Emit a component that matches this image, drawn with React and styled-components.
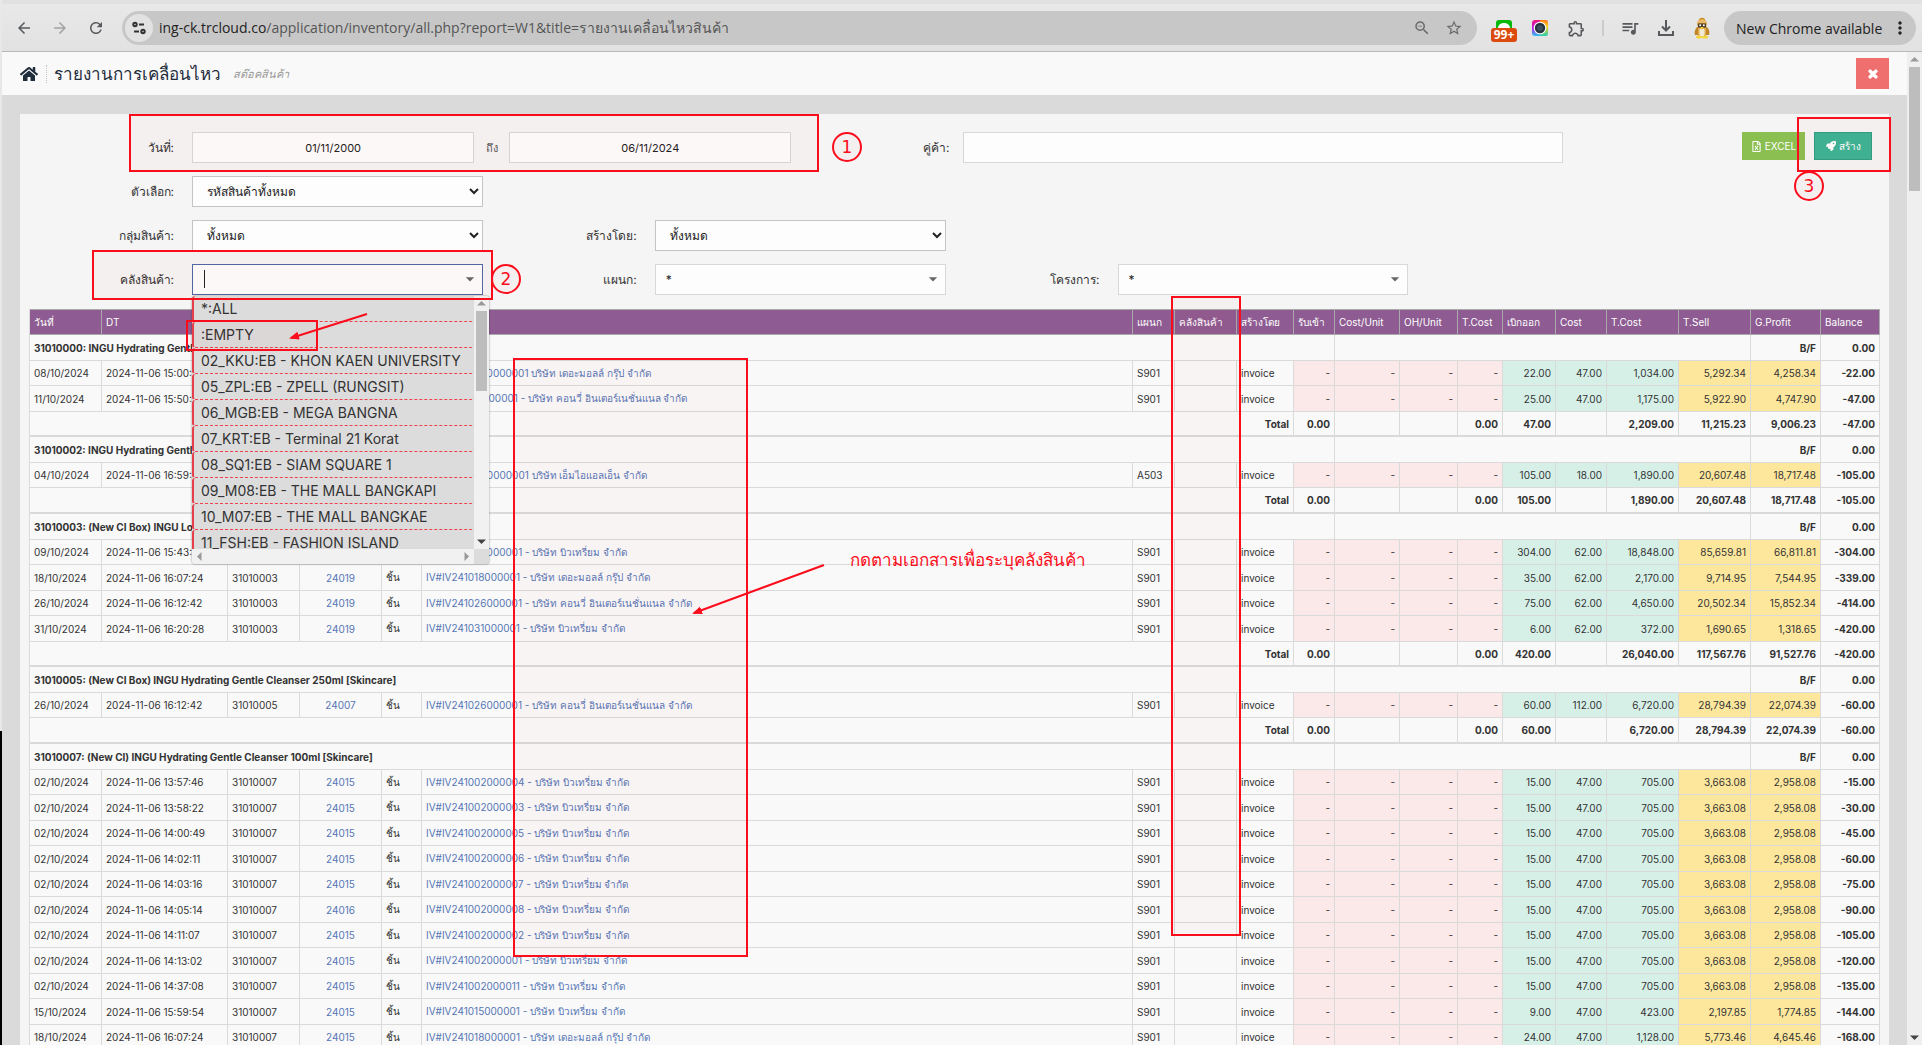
import styled, { createGlobalStyle } from "styled-components";
import {
  MdArrowBack,
  MdArrowForward,
  MdRefresh,
  MdZoomOut,
  MdStarBorder,
  MdOutlineExtension,
  MdOutlineQueueMusic,
  MdMoreVert,
  MdArrowDropDown,
  MdArrowDropUp,
  MdArrowLeft,
  MdArrowRight,
} from "react-icons/md";
import { FaHome, FaRocket, FaRegFileExcel, FaTimes } from "react-icons/fa";

const GlobalStyle = createGlobalStyle`
  * {
    box-sizing: border-box;
  }

  body {
    margin: 0;
    background: #fff;
    color: #333;
    font-family: Inter, "Noto Sans", sans-serif;
    font-size: 12px;
    overflow: hidden;
  }

  a {
    color: #5576b5;
    text-decoration: none;
  }
`;

const Screen = styled.div`
  position: relative;
  display: flex;
  height: 100vh;
  padding: 0 4px 5px 0;
  overflow: hidden;
`;

const EdgeStrip = styled.div`
  flex: none;
  width: 2px;
  background: linear-gradient(#e8e8e8 70%, #000 70%);
`;

const Browser = styled.div`
  flex: 1;
  min-width: 0;
  display: flex;
  flex-direction: column;
`;

/* ---------- browser toolbar ---------- */

const Toolbar = styled.div`
  flex: none;
  display: flex;
  align-items: center;
  height: 52px;
  padding: 1px 6px 0 4px;
  border-top: 4px solid #e1e1e1;
  border-bottom: 1px solid #b9b9b9;
  background: linear-gradient(#e8e8e8, #e2e2e2);
  font-family: "Open Sans", "Noto Sans", sans-serif;
`;

const ToolButton = styled.button`
  position: relative;
  flex: none;
  display: flex;
  align-items: center;
  justify-content: center;
  width: 36px;
  height: 34px;
  padding: 0;
  border: 0;
  background: none;
  color: ${(p) => (p.$faded ? "#a2a2a2" : "#57595c")};
`;

const AddressBar = styled.div`
  flex: 1;
  display: flex;
  align-items: center;
  height: 34px;
  margin: 0 9px 0 8px;
  padding: 0 7px 0 3px;
  border-radius: 17px;
  background: #c7c7c7;
`;

const SiteInfo = styled.span`
  display: flex;
  align-items: center;
  justify-content: center;
  width: 28px;
  height: 28px;
  margin-right: 6px;
  border-radius: 50%;
  background: #e2e2e2;
`;

const Address = styled.span`
  flex: 1;
  color: #555;
  font-size: 14px;
  white-space: nowrap;

  b {
    color: #222;
    font-weight: 400;
  }
`;

const AddressIcon = styled.span`
  display: flex;
  justify-content: center;
  width: 32px;
  color: #6a6b6d;
`;

const UnreadBadge = styled.span`
  position: absolute;
  left: 5px;
  bottom: 3px;
  width: 26px;
  height: 14px;
  border-radius: 3px;
  background: #dd4a0e;
  color: #fff;
  font-family: "Open Sans", sans-serif;
  font-size: 12px;
  font-weight: 700;
  line-height: 14px;
`;

const ToolDivider = styled.span`
  width: 2px;
  height: 16px;
  margin: 0 8px;
  background: #cbcbcb;
`;

const UpdatePill = styled.button`
  display: flex;
  align-items: center;
  justify-content: space-between;
  width: 192px;
  height: 34px;
  margin-left: 4px;
  padding: 0 6px 0 12px;
  border: 0;
  border-radius: 17px;
  background: #c7c7c7;
  color: #222;
  font-family: inherit;
  font-size: 14px;
  white-space: nowrap;
`;

/* ---------- page ---------- */

const Viewport = styled.div`
  flex: 1;
  min-height: 0;
  display: flex;
`;

const Page = styled.main`
  flex: 1;
  min-width: 0;
  overflow: hidden;
  background: #dadada;
`;

const PageHeader = styled.header`
  display: flex;
  align-items: center;
  height: 43px;
  margin-bottom: 19px;
  padding: 0 18px 0 18px;
  background: #f9f9f9;
`;

const HomeLink = styled.a`
  display: flex;
  padding-right: 8px;
  border-right: 1px dotted #c4c4c4;
  color: #1f2d3d;
`;

const Title = styled.h1`
  margin: 0 12px 0 7px;
  color: #1f2d3d;
  font-size: 17px;
  font-weight: 400;
`;

const Subtitle = styled.span`
  flex: 1;
  color: #999;
  font-size: 11px;
  font-style: italic;
`;

const CloseButton = styled.button`
  display: flex;
  align-items: center;
  justify-content: center;
  width: 33px;
  height: 31px;
  padding: 0;
  border: 0;
  background: #ef6f6f;
  color: #fff;

  path {
    stroke: #fff;
    stroke-width: 50;
  }
`;

const Panel = styled.section`
  margin: 0 18px;
  padding: 18px 9px 0;
  background: #f5f5f5;
`;

const Filters = styled.form`
  display: grid;
  gap: 13px;
  margin-bottom: 14px;
`;

const TopFilters = styled.div`
  display: grid;
  grid-template-columns: 163px 599fr 172px 599fr 317fr;
`;

const FilterRow = styled.div`
  display: grid;
  grid-template-columns: repeat(4, 1fr);
`;

const Field = styled.div`
  display: grid;
  grid-template-columns: 163px 1fr;
  padding-right: 9px;
`;

const Label = styled.label`
  align-self: center;
  padding-right: ${(p) => p.$gap || 18}px;
  font-size: 12px;
  text-align: right;
  white-space: nowrap;
`;

const TextInput = styled.input`
  flex: 1;
  min-width: 0;
  width: 100%;
  height: 31px;
  padding: 0 12px;
  border: 1px solid ${(p) => (p.$active ? "#4f69a8" : "#d8d8d8")};
  border-radius: 0;
  outline: 0;
  background: #fdfdfd;
  color: #222;
  font-family: inherit;
  font-size: 11px;
  text-align: ${(p) => (p.$center ? "center" : "left")};
`;

const DateRange = styled.div`
  display: flex;
  align-items: center;
`;

const Until = styled.span`
  width: 35px;
  color: #555;
  font-size: 11px;
  text-align: center;
`;

const Select = styled.select`
  width: 100%;
  height: 31px;
  padding: 0 0 0 10px;
  border: 1px solid ${(p) => (p.$plain ? "#d8d8d8" : "#c4c4c4")};
  border-radius: 0;
  background: #fdfdfd;
  color: #222;
  font-family: inherit;
  font-size: 12px;
  appearance: ${(p) => (p.$plain ? "none" : "auto")};
`;

const ComboBox = styled.div`
  position: relative;
`;

const ComboArrow = styled(MdArrowDropDown)`
  position: absolute;
  top: 5px;
  right: 3px;
  color: #666;
`;

const Caret = styled.span`
  position: absolute;
  top: 6px;
  left: 12px;
  width: 1px;
  height: 18px;
  background: #222;
`;

const Actions = styled.div`
  display: flex;
  justify-content: flex-end;
  align-items: flex-start;
  gap: 9px;
  padding-right: 8px;
`;

const ActionButton = styled.button`
  display: flex;
  align-items: center;
  justify-content: center;
  gap: 3px;
  width: ${(p) => (p.$primary ? 58 : 63)}px;
  height: 28px;
  padding: 0;
  border: 1px solid ${(p) => (p.$primary ? "#2f9f82" : "#8bbf52")};
  background: ${(p) => (p.$primary ? "#3cb495" : "#8bbf52")};
  color: #fff;
  font-family: inherit;
  font-size: 10px;
  white-space: nowrap;
`;

/* ---------- warehouse menu ---------- */

const Menu = styled.div`
  position: absolute;
  top: 32px;
  left: 0;
  z-index: 2;
  display: grid;
  grid-template-columns: 1fr 15px;
  grid-template-rows: 253px 15px;
  width: 297px;
  border-radius: 3px;
  background: #dcdcdc;
  box-shadow: 0 0 2px rgba(0, 0, 0, 0.5);
  overflow: hidden;
`;

const MenuList = styled.ul`
  margin: 0;
  padding: 0;
  overflow: hidden;
  list-style: none;
`;

const MenuItem = styled.li`
  height: 26px;
  padding-left: 7px;
  border-bottom: 1px dashed #f0404c;
  border-left: 2px solid #e8404a;
  border-radius: 3px;
  font-size: 14px;
  line-height: 26px;
  white-space: nowrap;
`;

const MenuScrollY = styled.div`
  display: flex;
  flex-direction: column;
  align-items: center;
  justify-content: space-between;
  background: #f1f1f1;
`;

const MenuThumb = styled.span`
  width: 11px;
  height: 80px;
  margin-bottom: auto;
  background: #bdbdbd;
`;

const MenuScrollX = styled.div`
  display: flex;
  align-items: center;
  justify-content: space-between;
  background: #f1f1f1;
  color: #999;
`;

const ScrollArrow = styled.svg`
  flex: none;
  width: 15px;
  height: 15px;
  fill: ${(p) => (p.$dark ? "#444" : "#999")};
`;

/* ---------- report table ---------- */

const Table = styled.table`
  width: 100%;
  table-layout: fixed;
  border-collapse: separate;
  border-spacing: 0;
  border-left: 1px solid #dadada;
  font-size: 10px;
`;

const HeadCell = styled.th`
  height: 26px;
  padding: 0 0 0 4px;
  border: 1px solid #aaa;
  border-left: 0;
  background: #8e5c92;
  color: #fff;
  font-weight: 400;
  text-align: left;
  white-space: nowrap;
`;

const tones = { in: "#fbe8e8", out: "#d6f0e8", sell: "#fde79d" };

const Cell = styled.td`
  height: 25px;
  padding: 0 4px;
  border-right: 1px solid #dadada;
  border-bottom: 1px solid #dadada;
  background: ${(p) => tones[p.$tone] || "#f9f9f9"};
  font-weight: ${(p) => (p.$bold ? 700 : 400)};
  text-align: ${(p) => p.$align || "left"};
  white-space: nowrap;
`;

const Row = styled.tr`
  &:nth-child(odd) ${Cell} {
    height: 26px;
  }

  ${Cell} {
    border-bottom-width: ${(p) => (p.$total ? 2 : 1)}px;
  }
`;

/* ---------- page scrollbar ---------- */

const ScrollBar = styled.div`
  flex: none;
  display: flex;
  flex-direction: column;
  align-items: center;
  width: 15px;
  background: #efefef;
`;

const ScrollThumb = styled.span`
  width: 11px;
  height: 124px;
  margin-bottom: auto;
  background: #bdbdbd;
`;

/* ---------- notes drawn over the page ---------- */

const Notes = styled.svg`
  position: absolute;
  top: 0;
  left: 0;
  z-index: 3;
  width: 100%;
  height: 100%;
  pointer-events: none;

  rect,
  circle {
    fill: rgba(255, 0, 0, 0.02);
    stroke: #fb0d1b;
    stroke-width: 2;
  }

  line {
    stroke: #fb0d1b;
    stroke-width: 2;
  }

  text {
    fill: #fb0d1b;
    font-family: "DejaVu Sans", sans-serif;
    font-size: 17px;
  }
`;

const columnWidths = [72, 126, 72, 82, 40, null, 42, 62, 57, 41, 65, 58, 45, 53, 51, 72, 72, 70, 59];

const headings = [
  "วันที่", "DT", "", "", "", "", "แผนก", "คลังสินค้า", "สร้างโดย", "รับเข้า",
  "Cost/Unit", "OH/Unit", "T.Cost", "เบิกออก", "Cost", "T.Cost", "T.Sell", "G.Profit", "Balance",
];

const warehouses = [
  "*:ALL",
  ":EMPTY",
  "02_KKU:EB - KHON KAEN UNIVERSITY",
  "05_ZPL:EB - ZPELL (RUNGSIT)",
  "06_MGB:EB - MEGA BANGNA",
  "07_KRT:EB - Terminal 21 Korat",
  "08_SQ1:EB - SIAM SQUARE 1",
  "09_M08:EB - THE MALL BANGKAPI",
  "10_M07:EB - THE MALL BANGKAE",
  "11_FSH:EB - FASHION ISLAND",
];

const MALL = "บริษัท เดอะมอลล์ กรุ๊ป จำกัด";
const KONVY = "บริษัท คอนวี่ อินเตอร์เนชั่นแนล จำกัด";
const BEAUTRIUM = "บริษัท บิวเทรี่ยม จำกัด";
const MIL = "บริษัท เอ็มไอแอลเอ็น จำกัด";

// date, time, account, document, department, qty, cost, total cost, sell, profit, balance
const products = [
  {
    code: "31010000",
    name: "INGU Hydrating Gentle Cleanser",
    rows: [
      ["08/10/2024", "15:00:52", "24015", `IV#IV2410080000001 ${MALL}`, "S901", "22.00", "47.00", "1,034.00", "5,292.34", "4,258.34", "-22.00"],
      ["11/10/2024", "15:50:03", "24015", `IV#IV241011000001 - ${KONVY}`, "S901", "25.00", "47.00", "1,175.00", "5,922.90", "4,747.90", "-47.00"],
    ],
    total: ["47.00", "2,209.00", "11,215.23", "9,006.23", "-47.00"],
  },
  {
    code: "31010002",
    name: "INGU Hydrating Gentle Cleanser",
    rows: [
      ["04/10/2024", "16:59:51", "24015", `IV#IV2410040000001 ${MIL}`, "A503", "105.00", "18.00", "1,890.00", "20,607.48", "18,717.48", "-105.00"],
    ],
    total: ["105.00", "1,890.00", "20,607.48", "18,717.48", "-105.00"],
  },
  {
    code: "31010003",
    name: "(New CI Box) INGU Lotion",
    rows: [
      ["09/10/2024", "15:43:30", "24019", `IV#IV241009000001 - ${BEAUTRIUM}`, "S901", "304.00", "62.00", "18,848.00", "85,659.81", "66,811.81", "-304.00"],
      ["18/10/2024", "16:07:24", "24019", `IV#IV241018000001 - ${MALL}`, "S901", "35.00", "62.00", "2,170.00", "9,714.95", "7,544.95", "-339.00"],
      ["26/10/2024", "16:12:42", "24019", `IV#IV241026000001 - ${KONVY}`, "S901", "75.00", "62.00", "4,650.00", "20,502.34", "15,852.34", "-414.00"],
      ["31/10/2024", "16:20:28", "24019", `IV#IV241031000001 - ${BEAUTRIUM}`, "S901", "6.00", "62.00", "372.00", "1,690.65", "1,318.65", "-420.00"],
    ],
    total: ["420.00", "26,040.00", "117,567.76", "91,527.76", "-420.00"],
  },
  {
    code: "31010005",
    name: "(New CI Box) INGU Hydrating Gentle Cleanser 250ml [Skincare]",
    rows: [
      ["26/10/2024", "16:12:42", "24007", `IV#IV241026000001 - ${KONVY}`, "S901", "60.00", "112.00", "6,720.00", "28,794.39", "22,074.39", "-60.00"],
    ],
    total: ["60.00", "6,720.00", "28,794.39", "22,074.39", "-60.00"],
  },
  {
    code: "31010007",
    name: "(New CI) INGU Hydrating Gentle Cleanser 100ml [Skincare]",
    rows: [
      ["02/10/2024", "13:57:46", "24015", `IV#IV241002000004 - ${BEAUTRIUM}`, "S901", "15.00", "47.00", "705.00", "3,663.08", "2,958.08", "-15.00"],
      ["02/10/2024", "13:58:22", "24015", `IV#IV241002000003 - ${BEAUTRIUM}`, "S901", "15.00", "47.00", "705.00", "3,663.08", "2,958.08", "-30.00"],
      ["02/10/2024", "14:00:49", "24015", `IV#IV241002000005 - ${BEAUTRIUM}`, "S901", "15.00", "47.00", "705.00", "3,663.08", "2,958.08", "-45.00"],
      ["02/10/2024", "14:02:11", "24015", `IV#IV241002000006 - ${BEAUTRIUM}`, "S901", "15.00", "47.00", "705.00", "3,663.08", "2,958.08", "-60.00"],
      ["02/10/2024", "14:03:16", "24015", `IV#IV241002000007 - ${BEAUTRIUM}`, "S901", "15.00", "47.00", "705.00", "3,663.08", "2,958.08", "-75.00"],
      ["02/10/2024", "14:05:14", "24016", `IV#IV241002000008 - ${BEAUTRIUM}`, "S901", "15.00", "47.00", "705.00", "3,663.08", "2,958.08", "-90.00"],
      ["02/10/2024", "14:11:07", "24015", `IV#IV241002000002 - ${BEAUTRIUM}`, "S901", "15.00", "47.00", "705.00", "3,663.08", "2,958.08", "-105.00"],
      ["02/10/2024", "14:13:02", "24015", `IV#IV241002000001 - ${BEAUTRIUM}`, "S901", "15.00", "47.00", "705.00", "3,663.08", "2,958.08", "-120.00"],
      ["02/10/2024", "14:37:08", "24015", `IV#IV241002000011 - ${BEAUTRIUM}`, "S901", "15.00", "47.00", "705.00", "3,663.08", "2,958.08", "-135.00"],
      ["15/10/2024", "15:59:54", "24015", `IV#IV241015000001 - ${BEAUTRIUM}`, "S901", "9.00", "47.00", "423.00", "2,197.85", "1,774.85", "-144.00"],
      ["18/10/2024", "16:07:24", "24015", `IV#IV241018000001 - ${MALL}`, "S901", "24.00", "47.00", "1,128.00", "5,773.46", "4,645.46", "-168.00"],
    ],
  },
];

const BrowserToolbar = () => (
  <Toolbar>
    <ToolButton aria-label="Back"><MdArrowBack size={18} /></ToolButton>
    <ToolButton aria-label="Forward" $faded><MdArrowForward size={18} /></ToolButton>
    <ToolButton aria-label="Reload"><MdRefresh size={18} /></ToolButton>
    <AddressBar>
      <SiteInfo>
        <svg width="14" height="14" viewBox="0 0 14 14" fill="none" stroke="#333" strokeWidth="2">
          <circle cx="3" cy="3.5" r="1.7" />
          <path d="M7 3.5h5M2 10.5h5" />
          <circle cx="11" cy="10.5" r="1.7" />
        </svg>
      </SiteInfo>
      <Address>
        <b>ing-ck.trcloud.co</b>/application/inventory/all.php?report=W1&amp;title=รายงานเคลื่อนไหวสินค้า
      </Address>
      <AddressIcon><MdZoomOut size={18} /></AddressIcon>
      <AddressIcon><MdStarBorder size={18} /></AddressIcon>
    </AddressBar>
    <ToolButton aria-label="Messages">
      <svg width="16" height="16" viewBox="0 0 16 16">
        <rect width="16" height="16" rx="3" fill="#06b90c" />
        <ellipse cx="8" cy="8" rx="6" ry="5" fill="#fff" />
      </svg>
      <UnreadBadge>99+</UnreadBadge>
    </ToolButton>
    <ToolButton aria-label="Screenshot">
      <svg width="16" height="16" viewBox="0 0 16 16">
        <defs>
          <linearGradient id="lensA" x1="0" y1="0" x2="0" y2="1">
            <stop offset="0" stopColor="#f2187e" />
            <stop offset="0.5" stopColor="#c01be0" />
            <stop offset="1" stopColor="#28c4f5" />
          </linearGradient>
          <linearGradient id="lensB" x1="0" y1="0" x2="0" y2="1">
            <stop offset="0" stopColor="#ff7a1a" />
            <stop offset="0.4" stopColor="#ffd21c" />
            <stop offset="1" stopColor="#22d0b0" />
          </linearGradient>
        </defs>
        <rect width="16" height="16" rx="3" fill="url(#lensA)" />
        <path d="M8 0h5a3 3 0 0 1 3 3v10a3 3 0 0 1-3 3H8z" fill="url(#lensB)" />
        <circle cx="8" cy="8" r="6.3" fill="#fff" />
        <circle cx="8" cy="8" r="5.2" fill="#27333f" />
        <circle cx="8" cy="8" r="2.8" fill="#3f5261" />
      </svg>
    </ToolButton>
    <ToolButton aria-label="Extensions"><MdOutlineExtension size={19} /></ToolButton>
    <ToolDivider />
    <ToolButton aria-label="Media"><MdOutlineQueueMusic size={20} /></ToolButton>
    <ToolButton aria-label="Downloads">
      <svg width="18" height="18" viewBox="0 0 18 18" fill="none" stroke="currentColor" strokeWidth="2">
        <path d="M9 1v10M5 7.5l4 4 4-4M2 12v4h14v-4" />
      </svg>
    </ToolButton>
    <ToolButton aria-label="Profile">
      <svg width="18" height="22" viewBox="0 0 18 22">
        <path d="M6 3c0-3 6-3 6 0z" fill="#c98a1e" />
        <path d="M4 10c-2 2-3 5-2 8h14c1-3 0-6-2-8z" fill="#bf8526" />
        <path d="M5 11h8v8H5z" fill="#e0ac4f" />
        <ellipse cx="9" cy="15" rx="2.6" ry="5" fill="#f1ead6" />
        <circle cx="9" cy="7" r="4.8" fill="#c98f36" />
        <path d="M4 6c1-5 9-5 10 0z" fill="#e9b964" />
        <rect x="5" y="6.5" width="8" height="4" rx="1" fill="#4a3c28" />
        <circle cx="7.2" cy="8.3" r="1" fill="#fff" />
        <circle cx="10.800" cy="8.3" r="1" fill="#fff" />
        <path d="M7.5 10h3L9 13z" fill="#f7cf2c" />
        <ellipse cx="6" cy="20" rx="3" ry="1.5" fill="#f4d63b" />
        <ellipse cx="12" cy="20" rx="3" ry="1.5" fill="#f4d63b" />
      </svg>
    </ToolButton>
    <UpdatePill>
      New Chrome available
      <MdMoreVert size={20} />
    </UpdatePill>
  </Toolbar>
);

const arrows = {
  up: "M3 9.500h9L7.500 5z",
  down: "M3 5.500h9L7.500 10z",
  left: "M9.500 3v9L5 7.500z",
  right: "M5.500 3v9L10 7.500z",
};

const Arrow = ({ to, dark }) => (
  <ScrollArrow viewBox="0 0 15 15" $dark={dark}>
    <path d={arrows[to]} />
  </ScrollArrow>
);

const WarehouseField = () => (
  <Field>
    <Label htmlFor="warehouse">คลังสินค้า:</Label>
    <ComboBox>
      <TextInput id="warehouse" $active />
      <Caret />
      <ComboArrow size={20} />
      <Menu>
        <MenuList>
          {warehouses.map((item) => (
            <MenuItem key={item}>{item}</MenuItem>
          ))}
        </MenuList>
        <MenuScrollY>
          <Arrow to="up" />
          <MenuThumb />
          <Arrow to="down" dark />
        </MenuScrollY>
        <MenuScrollX>
          <Arrow to="left" />
          <Arrow to="right" />
        </MenuScrollX>
      </Menu>
    </ComboBox>
  </Field>
);

const ComboField = ({ id, label }) => (
  <Field>
    <Label htmlFor={id}>{label}</Label>
    <ComboBox>
      <Select id={id} $plain>
        <option>*</option>
      </Select>
      <ComboArrow size={20} />
    </ComboBox>
  </Field>
);

const SelectField = ({ id, label, value }) => (
  <Field>
    <Label htmlFor={id}>{label}</Label>
    <Select id={id}>
      <option>{value}</option>
    </Select>
  </Field>
);

const FilterForm = () => (
  <Filters onSubmit={(e) => e.preventDefault()}>
    <TopFilters>
      <Label htmlFor="from">วันที่:</Label>
      <DateRange>
        <TextInput id="from" defaultValue="01/11/2000" $center />
        <Until>ถึง</Until>
        <TextInput aria-label="ถึง" defaultValue="06/11/2024" $center />
      </DateRange>
      <Label htmlFor="partner" $gap={14}>คู่ค้า:</Label>
      <TextInput id="partner" />
      <Actions>
        <ActionButton type="button"><FaRegFileExcel size={11} />EXCEL</ActionButton>
        <ActionButton type="submit" $primary><FaRocket size={10} />สร้าง</ActionButton>
      </Actions>
    </TopFilters>
    <FilterRow>
      <SelectField id="option" label="ตัวเลือก:" value="รหัสสินค้าทั้งหมด" />
    </FilterRow>
    <FilterRow>
      <SelectField id="group" label="กลุ่มสินค้า:" value="ทั้งหมด" />
      <SelectField id="creator" label="สร้างโดย:" value="ทั้งหมด" />
    </FilterRow>
    <FilterRow>
      <WarehouseField />
      <ComboField id="department" label="แผนก:" />
      <ComboField id="project" label="โครงการ:" />
    </FilterRow>
  </Filters>
);

const ProductRows = ({ product }) => (
  <tbody>
    <Row>
      <Cell colSpan={10} $bold>{product.code}: {product.name}</Cell>
      <Cell colSpan={7} />
      <Cell $bold $align="right">B/F</Cell>
      <Cell $bold $align="right">0.00</Cell>
    </Row>
    {product.rows.map(([date, time, account, doc, dept, qty, cost, amount, sell, profit, balance]) => (
      <Row key={date + time}>
        <Cell>{date}</Cell>
        <Cell>2024-11-06 {time}</Cell>
        <Cell>{product.code}</Cell>
        <Cell $align="center"><a href="#account">{account}</a></Cell>
        <Cell>ชิ้น</Cell>
        <Cell><a href="#document">{doc}</a></Cell>
        <Cell>{dept}</Cell>
        <Cell />
        <Cell>invoice</Cell>
        {[1, 2, 3, 4].map((n) => (
          <Cell key={n} $tone="in" $align="right">-</Cell>
        ))}
        <Cell $tone="out" $align="right">{qty}</Cell>
        <Cell $tone="out" $align="right">{cost}</Cell>
        <Cell $tone="out" $align="right">{amount}</Cell>
        <Cell $tone="sell" $align="right">{sell}</Cell>
        <Cell $tone="sell" $align="right">{profit}</Cell>
        <Cell $bold $align="right">{balance}</Cell>
      </Row>
    ))}
    {product.total && (
      <Row $total>
        <Cell colSpan={9} $bold $align="right">Total</Cell>
        {["0.00", "", "", "0.00", product.total[0], "", ...product.total.slice(1)].map((value, i) => (
          <Cell key={i} $bold $align="right">{value}</Cell>
        ))}
      </Row>
    )}
  </tbody>
);

const App = () => (
  <>
    <GlobalStyle />
    <Screen>
      <EdgeStrip />
      <Browser>
        <BrowserToolbar />
        <Viewport>
          <Page>
            <PageHeader>
              <HomeLink href="#home" aria-label="Home"><FaHome size={18} /></HomeLink>
              <Title>รายงานการเคลื่อนไหว</Title>
              <Subtitle>สต๊อคสินค้า</Subtitle>
              <CloseButton aria-label="Close"><FaTimes size={12} /></CloseButton>
            </PageHeader>
            <Panel>
              <FilterForm />
              <Table>
                <colgroup>
                  {columnWidths.map((width, i) => (
                    <col key={i} width={width || undefined} />
                  ))}
                </colgroup>
                <thead>
                  <tr>
                    {headings.map((heading, i) => (
                      <HeadCell key={i}>{heading}</HeadCell>
                    ))}
                  </tr>
                </thead>
                {products.map((product) => (
                  <ProductRows key={product.code} product={product} />
                ))}
              </Table>
            </Panel>
          </Page>
          <ScrollBar>
            <Arrow to="up" />
            <ScrollThumb />
            <Arrow to="down" dark />
          </ScrollBar>
        </Viewport>
      </Browser>
      <Notes>
        <defs>
          <marker id="tip" markerWidth="6" markerHeight="6" refX="4" refY="2" orient="auto">
            <path d="M0 0l5 2-5 2z" fill="#fb0d1b" />
          </marker>
        </defs>
        <rect x="130" y="115" width="688" height="56" />
        <rect x="93" y="251" width="399" height="48" />
        <rect x="187" y="321" width="130" height="29" />
        <rect x="514" y="359" width="233" height="597" />
        <rect x="1172" y="297" width="68" height="638" />
        <rect x="1798" y="118" width="92" height="53" />
        <circle cx="847" cy="147" r="14" />
        <circle cx="506" cy="279" r="14" />
        <circle cx="1809" cy="186" r="14" />
        <text x="847" y="153" textAnchor="middle">1</text>
        <text x="506" y="285" textAnchor="middle">2</text>
        <text x="1809" y="192" textAnchor="middle">3</text>
        <line x1="367" y1="314" x2="291" y2="338" markerEnd="url(#tip)" />
        <line x1="824" y1="565" x2="694" y2="613" markerEnd="url(#tip)" />
        <text x="850" y="566">กดตามเอกสารเพื่อระบุคลังสินค้า</text>
      </Notes>
    </Screen>
  </>
);

export default App;
